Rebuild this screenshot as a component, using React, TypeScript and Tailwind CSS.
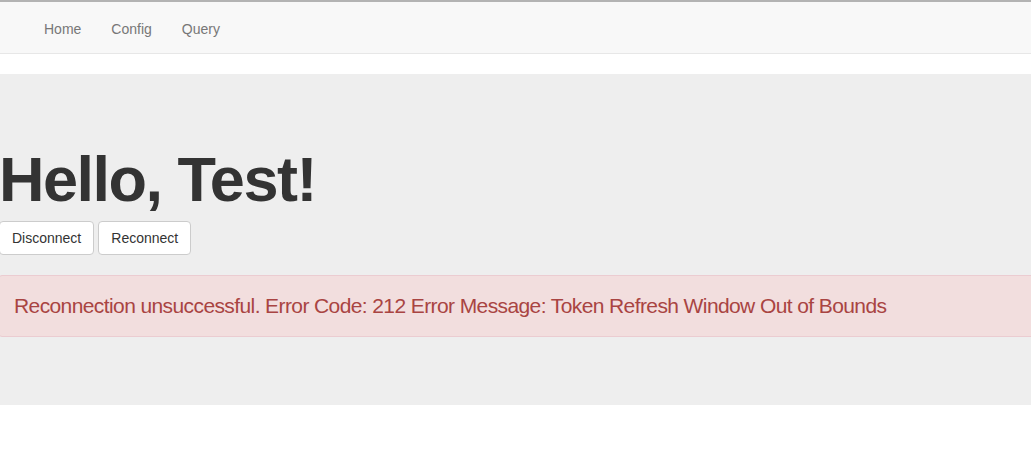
export default function App() {
  return (
    <div className="w-[1031px] h-[451px] overflow-hidden bg-white text-[#333]" style={{ fontFamily: '"Liberation Sans", Arial, sans-serif' }}>
      <div className="h-[2px] bg-[#b3b3b3]" />
      <nav className="h-[52px] bg-[#f8f8f8] border-b border-[#e7e7e7] flex items-center pl-[29px]">
        <a className="px-[15px] text-[14px] leading-[20px] text-[#777] mt-[2px]">Home</a>
        <a className="px-[15px] text-[14px] leading-[20px] text-[#777] mt-[2px]">Config</a>
        <a className="px-[15px] text-[14px] leading-[20px] text-[#777] mt-[2px]">Query</a>
      </nav>
      <div className="mt-[20px] bg-[#eeeeee] pt-[71px] pb-[68px]">
        <h1 className="text-[63px] leading-[1.1] font-bold tracking-[-1.5px] text-[#333] -ml-[1px]">Hello, Test!</h1>
        <div className="mt-[7px] flex gap-[4px] -ml-[1px]">
          <button className="h-[34px] px-[12px] text-[14px] bg-white border border-[#ccc] rounded-[4px] text-[#333]">Disconnect</button>
          <button className="h-[34px] px-[12px] text-[14px] bg-white border border-[#ccc] rounded-[4px] text-[#333]">Reconnect</button>
        </div>
        <div className="mt-[20px] -ml-[2px] -mr-[4px] bg-[#f2dede] border border-[#ebccd1] rounded-[4px] p-[15px] text-[#a94442] text-[21px] leading-[30px] tracking-[-0.6px]">
          Reconnection unsuccessful. Error Code: 212 Error Message: Token Refresh Window Out of Bounds
        </div>
      </div>
    </div>
  );
}
